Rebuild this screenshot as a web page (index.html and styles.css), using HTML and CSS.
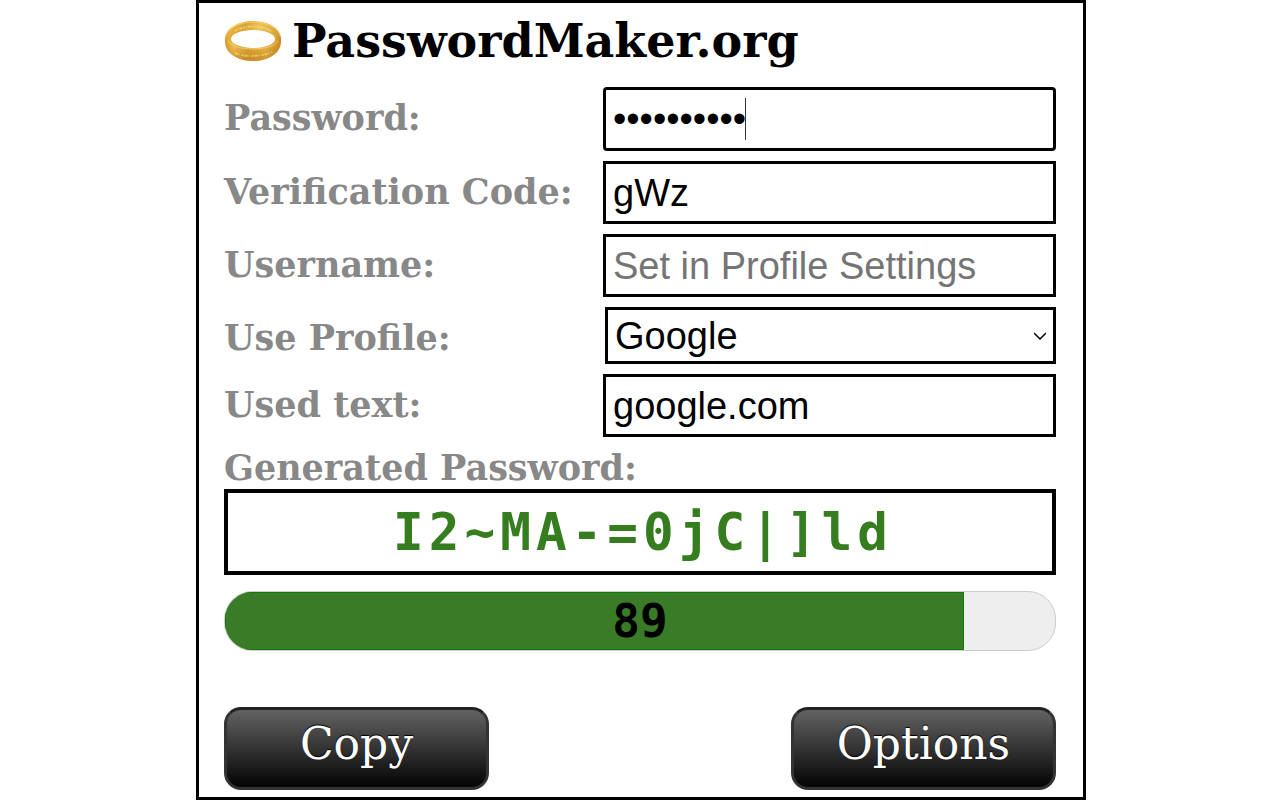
FILE: index.html
```html
<!DOCTYPE html>
<html lang="en">
<head>
<meta charset="utf-8">
<title>PasswordMaker.org</title>
<link rel="stylesheet" href="styles.css">
</head>
<body>
<main class="popup">
  <header class="brand">
    <svg class="ring" viewBox="0 0 58 42" aria-hidden="true">
      <defs>
        <linearGradient id="inner" x1="0" y1="0" x2="1" y2="0">
          <stop offset="0" stop-color="#e8b040"/>
          <stop offset=".35" stop-color="#d9a436"/>
          <stop offset=".65" stop-color="#ecc458"/>
          <stop offset="1" stop-color="#d9a038"/>
        </linearGradient>
        <linearGradient id="outer" x1="0" y1="0" x2="1" y2="0">
          <stop offset="0" stop-color="#d69a30"/>
          <stop offset=".15" stop-color="#f4cc5c"/>
          <stop offset=".4" stop-color="#e0a838"/>
          <stop offset=".72" stop-color="#f0c050"/>
          <stop offset="1" stop-color="#cc8a24"/>
        </linearGradient>
        <linearGradient id="shade" x1="0" y1="0" x2="0" y2="1">
          <stop offset=".5" stop-color="#b06c10" stop-opacity="0"/>
          <stop offset="1" stop-color="#b06c10" stop-opacity=".55"/>
        </linearGradient>
      </defs>
      <path fill="url(#outer)" d="M29 1C13 1 1 9 1 19c0 3 0 5 1 8 3 8 13 14 27 14s24-6 27-14c1-3 1-5 1-8C57 9 45 1 29 1Z"/>
      <path fill="url(#shade)" d="M29 1C13 1 1 9 1 19c0 3 0 5 1 8 3 8 13 14 27 14s24-6 27-14c1-3 1-5 1-8C57 9 45 1 29 1Z"/>
      <ellipse cx="29" cy="16" rx="25" ry="13" fill="url(#inner)"/>
      <path fill="none" stroke="#f6d878" stroke-width="1" opacity=".7" d="M2 17C3 8 15 2 29 2s25 6 27 14M4 21c3 5 13 8 25 8s22-3 25-8"/>
      <path fill="none" stroke="#f6dc80" stroke-width="2" opacity=".7" stroke-dasharray="2 1 1 1 3 1" d="M11 11C20 5 38 5 47 11"/>
      <path fill="none" stroke="#f8d870" stroke-width="2" opacity=".7" stroke-dasharray="3 1 1 2 2 1" d="M11 33c9 4 27 4 37-1"/>
      <ellipse cx="29" cy="19" rx="22" ry="9" fill="#fff"/>
    </svg>
    <h1 class="title">PasswordMaker.org</h1>
  </header>

  <form class="fields">
    <label class="label" for="password">Password:</label>
    <div class="control">
      <input class="field field-active" id="password" type="password" value="masterpass">
      <span class="caret" aria-hidden="true"></span>
    </div>
    <label class="label" for="code">Verification Code:</label>
    <input class="field" id="code" type="text" value="gWz">
    <label class="label" for="username">Username:</label>
    <input class="field" id="username" type="text" placeholder="Set in Profile Settings">
    <label class="label" for="profile">Use Profile:</label>
    <div class="control control-select">
      <select class="select" id="profile"><option>Google</option></select>
      <svg class="chevron" viewBox="0 0 12 8" aria-hidden="true"><path d="M0 1l6 6 6-6"/></svg>
    </div>
    <label class="label" for="text">Used text:</label>
    <input class="field" id="text" type="text" value="google.com">
  </form>

  <label class="label label-result" for="result">Generated Password:</label>
  <input class="result" id="result" type="text" readonly value="I2~MA-=0jC|]ld">

  <div class="strength" role="meter" aria-label="Password strength" aria-valuemin="0" aria-valuemax="100" aria-valuenow="89">
    <div class="strength-fill" style="width: 89%"></div>
    <span class="strength-value">89</span>
  </div>

  <div class="actions">
    <button class="button" type="button">Copy</button>
    <button class="button" type="button">Options</button>
  </div>
</main>
</body>
</html>
```
FILE: styles.css
```css
* {
  box-sizing: border-box;
}

body {
  margin: 0;
  padding-left: 2px;
  background: #fff;
  font-family: "DejaVu Serif", serif;
}

.popup {
  display: flex;
  flex-direction: column;
  max-width: 890px;
  min-height: 100vh;
  margin: 0 auto;
  padding: 11px 27px 7px 25px;
  border: 3px solid #000;
}

.brand {
  display: flex;
  align-items: center;
  gap: 10px;
  margin-bottom: 19px;
}

.ring {
  width: 58px;
  height: 42px;
}

.title {
  margin: 0;
  font-size: 46px;
  line-height: 54px;
}

.fields {
  display: grid;
  grid-template-columns: 379fr 453fr;
  align-items: start;
  row-gap: 10px;
}

.label {
  padding-top: 6px;
  color: #888;
  font-size: 35px;
  font-weight: bold;
  line-height: 50px;
}

.control {
  position: relative;
}

.field,
.select {
  display: block;
  width: 100%;
  height: 63px;
  margin: 0;
  padding: 1px 7px 0;
  border: 3px solid #000;
  border-radius: 0;
  outline: none;
  background: #fff;
  color: #000;
  font-family: "Liberation Sans", Arial, sans-serif;
  font-size: 38px;
}

.field::placeholder {
  color: #757575;
}

.field-active {
  height: 64px;
  border-radius: 4px;
}

.caret {
  position: absolute;
  top: 11px;
  left: 142px;
  width: 1px;
  height: 42px;
  background: #333;
}

.control-select {
  padding-left: 2px;
}

.select {
  height: 57px;
  appearance: none;
}

.chevron {
  position: absolute;
  top: 25px;
  right: 10px;
  width: 12px;
  height: 8px;
  fill: none;
  stroke: #000;
  stroke-width: 1.5;
  pointer-events: none;
}

.label-result {
  margin-top: 10px;
  padding-top: 0;
  line-height: 42px;
}

.result {
  width: 100%;
  height: 86px;
  padding: 0 0 0 6px;
  border: 4px solid #000;
  border-radius: 0;
  outline: none;
  background: #fff;
  color: #357d1f;
  font-family: "DejaVu Sans Mono", monospace;
  font-size: 51px;
  font-weight: bold;
  letter-spacing: 5px;
  text-align: center;
}

.strength {
  position: relative;
  height: 60px;
  margin-top: 16px;
  overflow: hidden;
  border: 1px solid #ccc;
  border-radius: 28px;
  background: #eee;
}

.strength-fill {
  height: 100%;
  border: 1px solid #107a08;
  background: #397b26;
}

.strength-value {
  position: absolute;
  inset: 0;
  font-family: "DejaVu Sans Mono", monospace;
  font-size: 46px;
  font-weight: bold;
  line-height: 58px;
  text-align: center;
}

.actions {
  display: flex;
  justify-content: space-between;
  margin-top: auto;
}

.button {
  width: 265px;
  height: 83px;
  padding: 0 0 10px;
  border: 3px solid #333;
  border-top-color: #222;
  border-radius: 17px;
  background: linear-gradient(#666, #000);
  background-origin: border-box;
  color: #fff;
  font-family: "DejaVu Serif", serif;
  font-size: 44px;
  text-shadow: 0 -1px 1px #000;
}
```
